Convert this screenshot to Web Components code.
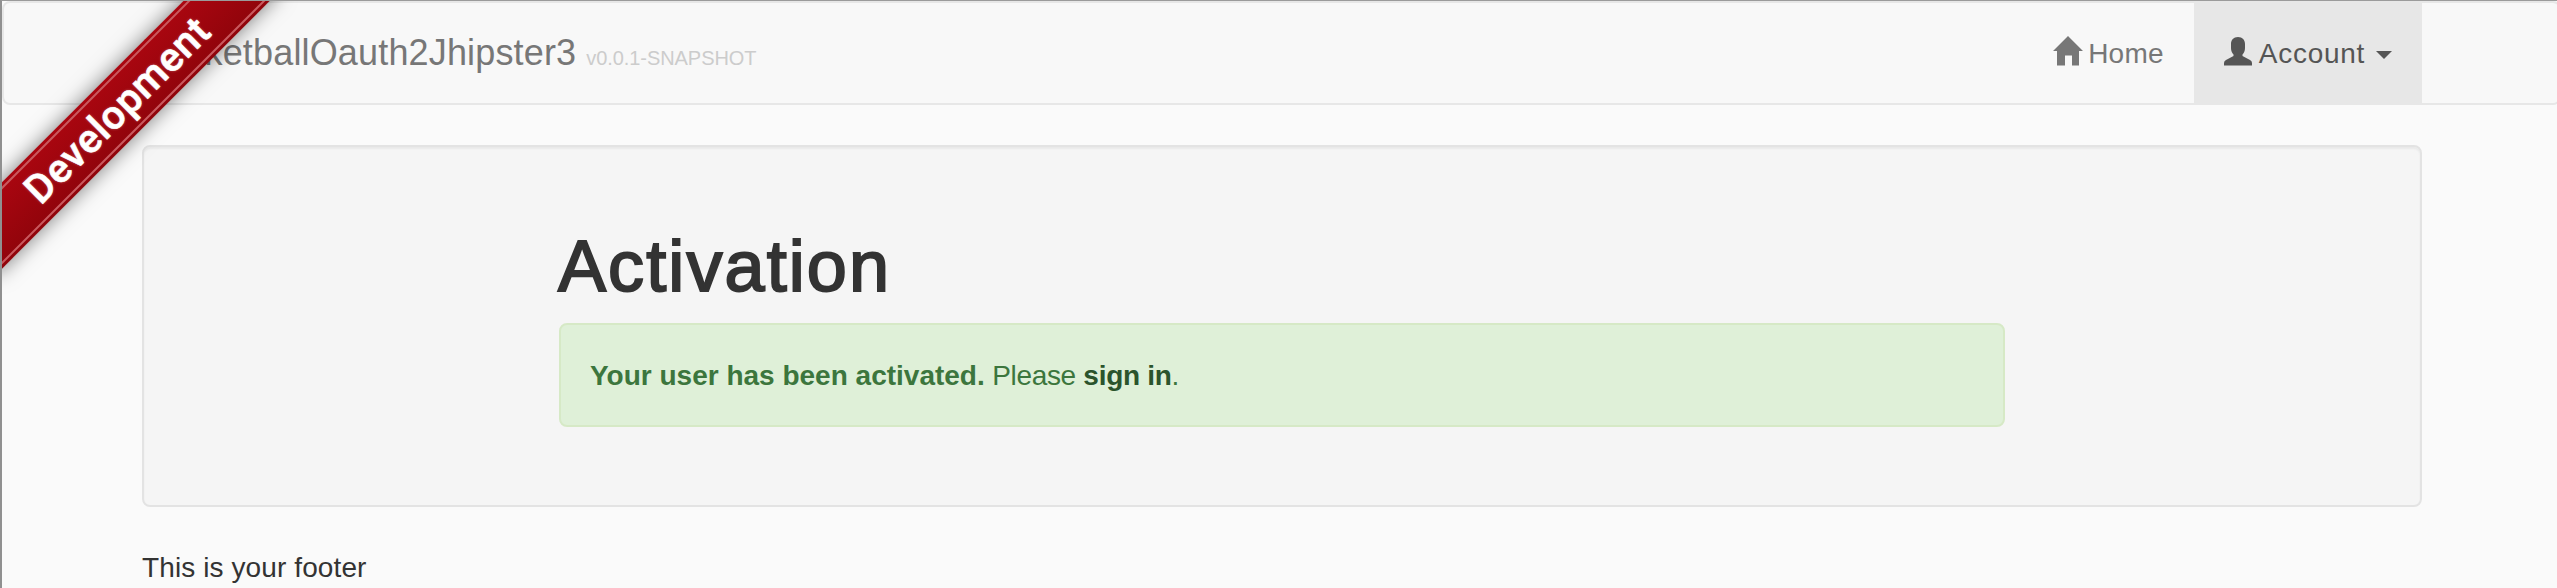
<!DOCTYPE html>
<html lang="en">
<head>
<meta charset="utf-8">
<title>Activation</title>
<style>
html{background:#fafafa}
body{margin:0;height:588px;overflow:hidden;box-sizing:border-box;border-top:1px solid #9b9b9b;border-left:2px solid #909090;background:#fafafa;color:#333;font:28px/40px "Liberation Sans",Arial,sans-serif;position:relative}
.b{font-weight:700}
</style>
</head>
<body>
<app-navbar>
  <fit-text slot="brand" w="434">BasketballOauth2Jhipster3</fit-text>
  <fit-text slot="version" w="170">v0.0.1-SNAPSHOT</fit-text>
  <nav-item><app-icon name="home"></app-icon><fit-text w="76">Home</fit-text></nav-item>
  <nav-item active caret><app-icon name="user"></app-icon><fit-text w="106">Account</fit-text></nav-item>
</app-navbar>
<page-well>
  <page-title><fit-text w="333">Activation</fit-text></page-title>
  <success-alert>
    <fit-text class="b" w="395">Your user has been activated.</fit-text>
    <fit-text slot="after" w="84">Please</fit-text>
    <fit-text slot="link" class="b" w="88">sign in</fit-text>
  </success-alert>
</page-well>
<page-footer><fit-text w="225">This is your footer</fit-text></page-footer>
<dev-ribbon><fit-text w="244">Development</fit-text></dev-ribbon>
<script>
function define(name, html, setup) {
  customElements.define(name, class extends HTMLElement {
    connectedCallback() {
      if (this.shadowRoot) return;
      this.attachShadow({mode: 'open'}).innerHTML = html;
      if (setup) setup(this);
    }
  });
}
define('app-navbar', `<style>
:host{display:block;box-sizing:border-box;height:104px;border:2px solid #e7e7e7;border-radius:8px;background:#f8f8f8;width:2559px}
.in{width:2280px;margin-left:138px;height:100px;display:flex}
.brand{display:flex;align-items:baseline;font-size:36px;line-height:100px;color:#777}
.v{font-size:20px;color:#ccc;margin-left:10px}
nav{margin-left:auto;display:flex}
</style><div class="in"><div class="brand"><slot name="brand"></slot><span class="v"><slot name="version"></slot></span></div><nav><slot></slot></nav></div>`);
define('nav-item', `<style>
:host{display:flex;align-items:center;height:100px;box-sizing:border-box;padding:2px 30px 0;color:#777;line-height:40px}
:host([active]){background:#e7e7e7;color:#555}
i{display:none;border:8px solid transparent;border-top-color:currentColor;border-bottom:0;margin:2px 0 0 11px}
:host([caret]) i{display:block}
</style><slot></slot><i></i>`);
define('app-icon', `<style>
:host{display:block;width:30px;height:30px;margin:-6px 5px 0 0}
svg{display:block}
</style><svg width="30" height="30" fill="currentColor"></svg>`, el => {
  el.shadowRoot.querySelector('svg').innerHTML = {
    home: '<path d="M15 0L30 15H26V29.5H19V19.500H12V29.500H4V15H0Z"/>',
    user: '<path d="M14 1C18.500 1 21 4 21 8V12C21 15 20 17 18.500 18.500V20L26 24Q28 25 28 27V29.500H0V27Q0 25 2 24L9.500 20V18.500C8 17 7 15 7 12V8C7 4 9.500 1 14 1Z"/>'
  }[el.getAttribute('name')];
});
define('page-well', `<style>
:host{display:block;box-sizing:border-box;width:2280px;height:362px;margin:40px 0 0 140px;padding:78px 415px 0;border:2px solid #e3e3e3;border-radius:8px;background:#f5f5f5;box-shadow:inset 0 2px 2px rgba(0,0,0,.05)}
</style><slot></slot>`);
define('page-title', `<style>
:host{display:block;box-sizing:border-box;height:98px;padding-top:1px;font-size:72px;line-height:80px;-webkit-text-stroke:2px #333;margin-left:-1px}
</style><slot></slot>`);
define('success-alert', `<style>
:host{display:flex;box-sizing:border-box;height:104px;border:2px solid #d6e9c6;border-radius:8px;background:#dff0d8;color:#3c763d;padding:31px 28px 29px 29px;line-height:40px}
.l{color:#2b542c}.g{width:7.500px}
</style><slot></slot><span class="g"></span><slot name="after"></slot><span class="g"></span><span class="l"><slot name="link"></slot></span><span>.</span>`);
define('page-footer', `<style>
:host{display:block;margin:41px 0 0 140px;line-height:40px}
</style><slot></slot>`);
define('dev-ribbon', `<style>
:host{position:absolute;left:0;top:0;width:340px;height:340px;overflow:hidden}
.r{position:absolute;left:-86px;top:79.5px;width:400px;height:61px;box-sizing:border-box;transform:rotate(-45deg);background:linear-gradient(#aa0610,#90040b);box-shadow:0 0 20px rgba(0,0,0,.5);display:flex;align-items:center;justify-content:center;padding-left:4px;color:#fff;font:500 40px/50px Roboto,sans-serif;-webkit-text-stroke:.6px #fff;text-shadow:0 0 3px rgba(255,255,255,.4)}
.r::before{content:"";position:absolute;inset:3px -4px;border:2px solid #c9595e}
</style><div class="r"><slot></slot></div>`);
// Sets the tracking so that the text takes up the advance width given in "w".
define('fit-text', `<style>:host{display:inline-block;white-space:nowrap}</style><slot></slot>`, el => {
  const n = el.textContent.length;
  el.style.letterSpacing = (el.getAttribute('w') - el.offsetWidth) / n + 'px';
});
</script>
</body>
</html>
